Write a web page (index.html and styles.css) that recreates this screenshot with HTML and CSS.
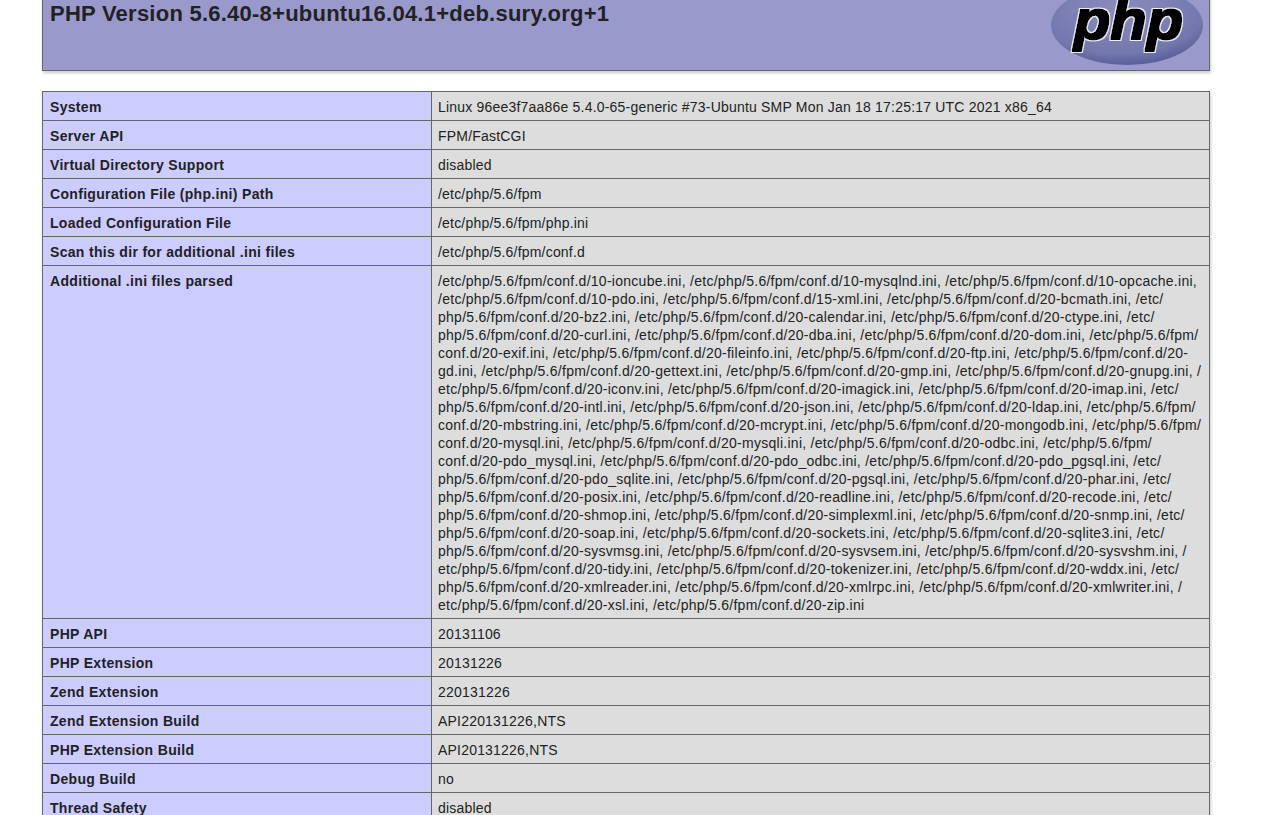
FILE: index.html
```html
<!DOCTYPE html>
<html lang="en">
<head>
<meta charset="utf-8">
<title>phpinfo()</title>
<link rel="stylesheet" href="styles.css">
</head>
<body>
<div class="page">
  <header class="banner">
    <svg class="logo" viewBox="0 0 154 84" width="154" height="84" aria-label="PHP logo">
      <defs>
        <radialGradient id="oval" cx="45%" cy="30%" r="72%">
          <stop offset="0" stop-color="#8a8dbd"/>
          <stop offset="0.78" stop-color="#7377ad"/>
          <stop offset="1" stop-color="#565a9a"/>
        </radialGradient>
        <filter id="outline" x="-10%" y="-20%" width="120%" height="140%">
          <feMorphology in="SourceAlpha" operator="dilate" radius="2" result="wide"/>
          <feGaussianBlur in="wide" stdDeviation="0.4" result="soft"/>
          <feFlood flood-color="#fff" flood-opacity="0.85"/>
          <feComposite in2="soft" operator="in" result="halo"/>
          <feMorphology in="SourceAlpha" operator="dilate" radius="0.7" result="core"/>
          <feFlood flood-color="#000"/>
          <feComposite in2="core" operator="in" result="ink"/>
          <feMerge>
            <feMergeNode in="halo"/>
            <feMergeNode in="ink"/>
          </feMerge>
        </filter>
      </defs>
      <ellipse cx="77" cy="41" rx="76" ry="40" fill="url(#oval)"/>
      <text class="logo-text" x="24" y="55" textLength="109" lengthAdjust="spacingAndGlyphs" filter="url(#outline)">php</text>
    </svg>
    <h1 class="title">PHP Version 5.6.40-8+ubuntu16.04.1+deb.sury.org+1</h1>
  </header>
  <table class="info">
    <colgroup><col class="key-col"><col></colgroup>
    <tr><td class="e">System</td><td class="v">Linux 96ee3f7aa86e 5.4.0-65-generic #73-Ubuntu SMP Mon Jan 18 17:25:17 UTC 2021 x86_64</td></tr>
    <tr><td class="e">Server API</td><td class="v">FPM/FastCGI</td></tr>
    <tr><td class="e">Virtual Directory Support</td><td class="v">disabled</td></tr>
    <tr><td class="e">Configuration File (php.ini) Path</td><td class="v">/etc/php/5.6/fpm</td></tr>
    <tr><td class="e">Loaded Configuration File</td><td class="v">/etc/php/5.6/fpm/php.ini</td></tr>
    <tr><td class="e">Scan this dir for additional .ini files</td><td class="v">/etc/php/5.6/fpm/conf.d</td></tr>
    <tr><td class="e">Additional .ini files parsed</td><td class="v paths">/etc/php/5.6/fpm/conf.d/10-ioncube.ini, /etc/php/5.6/fpm/conf.d/10-mysqlnd.ini, /etc/php/5.6/fpm/conf.d/10-opcache.ini,<br>/etc/php/5.6/fpm/conf.d/10-pdo.ini, /etc/php/5.6/fpm/conf.d/15-xml.ini, /etc/php/5.6/fpm/conf.d/20-bcmath.ini, /etc/<br>php/5.6/fpm/conf.d/20-bz2.ini, /etc/php/5.6/fpm/conf.d/20-calendar.ini, /etc/php/5.6/fpm/conf.d/20-ctype.ini, /etc/<br>php/5.6/fpm/conf.d/20-curl.ini, /etc/php/5.6/fpm/conf.d/20-dba.ini, /etc/php/5.6/fpm/conf.d/20-dom.ini, /etc/php/5.6/fpm/<br>conf.d/20-exif.ini, /etc/php/5.6/fpm/conf.d/20-fileinfo.ini, /etc/php/5.6/fpm/conf.d/20-ftp.ini, /etc/php/5.6/fpm/conf.d/20-<br>gd.ini, /etc/php/5.6/fpm/conf.d/20-gettext.ini, /etc/php/5.6/fpm/conf.d/20-gmp.ini, /etc/php/5.6/fpm/conf.d/20-gnupg.ini, /<br>etc/php/5.6/fpm/conf.d/20-iconv.ini, /etc/php/5.6/fpm/conf.d/20-imagick.ini, /etc/php/5.6/fpm/conf.d/20-imap.ini, /etc/<br>php/5.6/fpm/conf.d/20-intl.ini, /etc/php/5.6/fpm/conf.d/20-json.ini, /etc/php/5.6/fpm/conf.d/20-ldap.ini, /etc/php/5.6/fpm/<br>conf.d/20-mbstring.ini, /etc/php/5.6/fpm/conf.d/20-mcrypt.ini, /etc/php/5.6/fpm/conf.d/20-mongodb.ini, /etc/php/5.6/fpm/<br>conf.d/20-mysql.ini, /etc/php/5.6/fpm/conf.d/20-mysqli.ini, /etc/php/5.6/fpm/conf.d/20-odbc.ini, /etc/php/5.6/fpm/<br>conf.d/20-pdo_mysql.ini, /etc/php/5.6/fpm/conf.d/20-pdo_odbc.ini, /etc/php/5.6/fpm/conf.d/20-pdo_pgsql.ini, /etc/<br>php/5.6/fpm/conf.d/20-pdo_sqlite.ini, /etc/php/5.6/fpm/conf.d/20-pgsql.ini, /etc/php/5.6/fpm/conf.d/20-phar.ini, /etc/<br>php/5.6/fpm/conf.d/20-posix.ini, /etc/php/5.6/fpm/conf.d/20-readline.ini, /etc/php/5.6/fpm/conf.d/20-recode.ini, /etc/<br>php/5.6/fpm/conf.d/20-shmop.ini, /etc/php/5.6/fpm/conf.d/20-simplexml.ini, /etc/php/5.6/fpm/conf.d/20-snmp.ini, /etc/<br>php/5.6/fpm/conf.d/20-soap.ini, /etc/php/5.6/fpm/conf.d/20-sockets.ini, /etc/php/5.6/fpm/conf.d/20-sqlite3.ini, /etc/<br>php/5.6/fpm/conf.d/20-sysvmsg.ini, /etc/php/5.6/fpm/conf.d/20-sysvsem.ini, /etc/php/5.6/fpm/conf.d/20-sysvshm.ini, /<br>etc/php/5.6/fpm/conf.d/20-tidy.ini, /etc/php/5.6/fpm/conf.d/20-tokenizer.ini, /etc/php/5.6/fpm/conf.d/20-wddx.ini, /etc/<br>php/5.6/fpm/conf.d/20-xmlreader.ini, /etc/php/5.6/fpm/conf.d/20-xmlrpc.ini, /etc/php/5.6/fpm/conf.d/20-xmlwriter.ini, /<br>etc/php/5.6/fpm/conf.d/20-xsl.ini, /etc/php/5.6/fpm/conf.d/20-zip.ini</td></tr>
    <tr><td class="e">PHP API</td><td class="v">20131106</td></tr>
    <tr><td class="e">PHP Extension</td><td class="v">20131226</td></tr>
    <tr><td class="e">Zend Extension</td><td class="v">220131226</td></tr>
    <tr><td class="e">Zend Extension Build</td><td class="v">API220131226,NTS</td></tr>
    <tr><td class="e">PHP Extension Build</td><td class="v">API20131226,NTS</td></tr>
    <tr><td class="e">Debug Build</td><td class="v">no</td></tr>
    <tr><td class="e">Thread Safety</td><td class="v">disabled</td></tr>
  </table>
</div>
</body>
</html>
```
FILE: styles.css
```css
html, body {
  margin: 0;
  height: 100%;
  overflow: hidden;
  background: #fff;
}
.page {
  width: 1168px;
  margin: -19px 0 0 42px;
  font-family: "Liberation Sans", Arial, sans-serif;
  font-size: 14px;
  line-height: 18px;
  color: #222;
}
.banner {
  box-sizing: border-box;
  height: 90px;
  padding: 18px 5px 0 7px;
  border: 1px solid #666;
  background: #99c;
  box-shadow: 1px 2px 3px #ccc;
  margin-bottom: 20px;
}
.logo {
  float: right;
  display: block;
  margin-top: -16px;
}
.logo-text {
  font-family: "Liberation Sans", Arial, sans-serif;
  font-weight: 700;
  font-style: italic;
  font-size: 55px;
  fill: #000;
}
.title {
  margin: 0;
  font-size: 22px;
  line-height: 28px;
  font-weight: 700;
  letter-spacing: 0.24px;
  color: #222;
}
.info {
  width: 1168px;
  table-layout: fixed;
  border-collapse: collapse;
  box-shadow: 1px 2px 3px #ccc;
}
.key-col {
  width: 389px;
}
td {
  border: 1px solid #666;
  padding: 6px 6px 4px 7px;
  vertical-align: baseline;
}
.e {
  background: #ccf;
  font-weight: 700;
  letter-spacing: 0.32px;
}
.v {
  background: #ddd;
  padding-left: 6px;
  letter-spacing: 0.2px;
  white-space: nowrap;
}
.paths {
  letter-spacing: 0.27px;
}
```
